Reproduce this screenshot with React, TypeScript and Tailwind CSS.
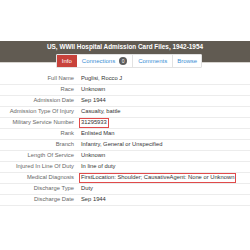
const rows: [string, string, boolean?][] = [
  ["Full Name", "Puglisi, Rocco J"],
  ["Race", "Unknown"],
  ["Admission Date", "Sep 1944"],
  ["Admission Type Of Injury", "Casualty, battle"],
  ["Military Service Number", "31295933", true],
  ["Rank", "Enlisted Man"],
  ["Branch", "Infantry, General or Unspecified"],
  ["Length Of Service", "Unknown"],
  ["Injured In Line Of Duty", "In line of duty"],
  ["Medical Diagnosis", "FirstLocation: Shoulder; CausativeAgent: None or Unknown", true],
  ["Discharge Type", "Duty"],
  ["Discharge Date", "Sep 1944"],
];

export default function App() {
  return (
    <div className="w-[250px] h-[250px] bg-white font-['Liberation_Sans',Arial,sans-serif] overflow-hidden">
      <div className="h-[41px]" />
      <div className="h-[22px] bg-[#615b52] border-b border-[#d6d3ce] flex flex-col items-center">
        <div className="text-white font-bold text-[6.4px] leading-none mt-[3px]">
          US, WWII Hospital Admission Card Files, 1942-1954
        </div>
        <div className="flex mt-[4px] h-[14px] shrink-0 bg-white border border-[#e2e2e2] rounded-[1px] text-[6px] leading-none ml-[8px]">
          <div className="bg-[#c8423b] text-white px-[5px] flex items-center">Info</div>
          <div className="text-[#3a8ed4] px-[5px] flex items-center gap-[4px] border-r border-[#e2e2e2]">
            Connections
            <span className="w-[8px] h-[8px] rounded-full bg-[#5c5c5c] text-white text-[5px] flex items-center justify-center">0</span>
          </div>
          <div className="text-[#3a8ed4] px-[5px] flex items-center border-r border-[#e2e2e2]">Comments</div>
          <div className="text-[#3a8ed4] px-[4px] flex items-center">Browse</div>
        </div>
      </div>
      <div className="mt-[11px] text-[5.8px] leading-none text-[#333]">
        {rows.map(([k, v, hl]) => (
          <div key={k} className="flex h-[11px] items-center border-b border-[#ececec]">
            <div className="w-[74px] text-right text-[#666] shrink-0">{k}</div>
            <div className="ml-[5px] flex items-center">
              {hl ? (
                <span className="border border-[#e04a4a] px-[1px] h-[10px] flex items-center">{v}</span>
              ) : (
                <span className="pl-[2px]">{v}</span>
              )}
            </div>
          </div>
        ))}
      </div>
    </div>
  );
}
